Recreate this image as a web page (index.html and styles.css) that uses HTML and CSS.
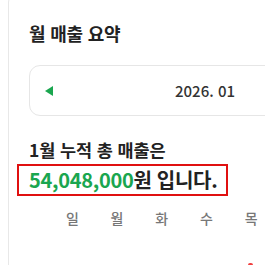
FILE: index.html
```html
<!DOCTYPE html>
<html lang="ko">
<head>
<meta charset="utf-8">
<link rel="stylesheet" href="styles.css">
</head>
<body>
<section class="card">
  <h2 class="title">월 매출 요약</h2>
  <div class="month-picker">
    <span class="arrow-left"></span>
    <span class="month-label">2026. 01</span>
    <span class="arrow-right"></span>
  </div>
  <p class="summary-line">1월 누적 총 매출은</p>
  <p class="summary-amount"><span class="amount">54,048,000</span>원 입니다.</p>
  <div class="weekdays">
    <span>일</span><span>월</span><span>화</span><span>수</span><span>목</span>
  </div>
  <div class="days">
    <span></span><span></span><span></span><span></span><span class="mark"></span>
  </div>
</section>
</body>
</html>
```
FILE: styles.css
```css
html, body {
  margin: 0;
  padding: 0;
  background: #ffffff;
  overflow: hidden;
}
body {
  font-family: "Noto Sans CJK KR", "Noto Sans", sans-serif;
  color: #222222;
  width: 265px;
  height: 265px;
}
.card {
  margin: -12px 0 0 8px;
  width: 420px;
  border: 1px solid #e8e8e8;
  border-radius: 14px;
  padding: 31px 0 0 20px;
  box-sizing: border-box;
  height: 300px;
}
.title {
  margin: 0;
  font-size: 18px;
  font-weight: 700;
  line-height: 26px;
  letter-spacing: -0.2px;
}
.month-picker {
  margin-top: 19px;
  width: 352px;
  height: 51px;
  box-sizing: border-box;
  border: 1px solid #e6e6e6;
  border-radius: 11px;
  display: flex;
  align-items: center;
  justify-content: space-between;
  padding: 0 15px;
}
.arrow-left {
  width: 0;
  height: 0;
  border-top: 5px solid transparent;
  border-bottom: 5px solid transparent;
  border-right: 8px solid #1aa64f;
}
.arrow-right {
  width: 0;
  height: 0;
  border-top: 5px solid transparent;
  border-bottom: 5px solid transparent;
  border-left: 8px solid #1aa64f;
}
.month-label {
  font-size: 15px;
  font-weight: 500;
  color: #333333;
}
.summary-line {
  margin: 22px 0 0 0;
  font-size: 17.5px;
  font-weight: 700;
  line-height: 24px;
  letter-spacing: -0.1px;
}
.summary-amount {
  display: inline-block;
  margin: 2px 0 0 -12px;
  padding: 0 9px 0 10px;
  border: 2px solid #e01010;
  font-size: 20px;
  font-weight: 700;
  line-height: 28px;
  letter-spacing: -0.3px;
}
.amount {
  color: #1aa64f;
}
.weekdays, .days {
  display: grid;
  grid-template-columns: repeat(5, 44.7px);
  margin-left: 21px;
}
.weekdays {
  margin-top: 12px;
  font-size: 14px;
  font-weight: 500;
  color: #777777;
  line-height: 20px;
}
.weekdays span, .days span {
  text-align: center;
}
.days {
  margin-top: 20px;
  height: 20px;
}
.mark {
  display: flex;
  justify-content: center;
}
.mark::before {
  content: "";
  width: 5px;
  height: 6px;
  margin-left: -2px;
  margin-top: 15px;
  background: #f04040;
  border-radius: 2px 2px 0 0;
}
```
